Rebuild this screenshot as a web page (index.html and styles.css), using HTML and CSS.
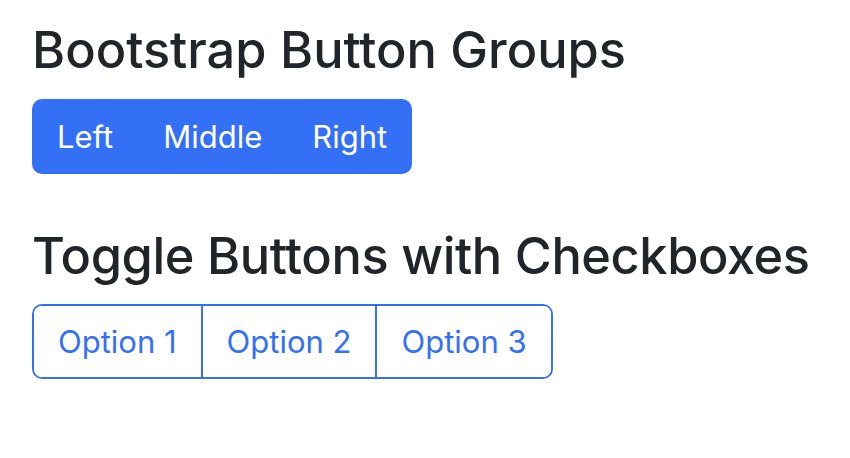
FILE: index.html
```html
<!DOCTYPE html>
<html>
<head>
<meta charset="utf-8">
<link rel="stylesheet" href="styles.css">
</head>
<body>
<div class="container">
  <h2 class="title">Bootstrap Button Groups</h2>
  <div class="btn-group solid">
    <button class="btn btn-primary">Left</button>
    <button class="btn btn-primary">Middle</button>
    <button class="btn btn-primary">Right</button>
  </div>
  <h2 class="title second">Toggle Buttons with Checkboxes</h2>
  <div class="btn-group outline">
    <label class="btn btn-outline">Option 1</label>
    <label class="btn btn-outline">Option 2</label>
    <label class="btn btn-outline">Option 3</label>
  </div>
</div>
</body>
</html>
```
FILE: styles.css
```css
html, body {
  margin: 0;
  padding: 0;
  background: #ffffff;
}
body {
  font-family: Inter, "Noto Sans", sans-serif;
  color: #212529;
}
.container {
  padding: 20px 32px;
  display: flex;
  flex-direction: column;
  align-items: flex-start;
}
.title {
  margin: 0;
  font-size: 50.5px;
  font-weight: 500;
  line-height: 60px;
  white-space: nowrap;
}
.title.second {
  margin-top: 52px;
  letter-spacing: -0.42px;
}
.btn-group {
  display: flex;
  margin-top: 19px;
  border-radius: 10px;
  overflow: hidden;
}
.outline {
  margin-top: 18px;
  border: 2px solid #3370f5;
}
.btn {
  display: block;
  font-family: inherit;
  font-size: 31px;
  line-height: 45px;
  height: 75px;
  box-sizing: border-box;
  padding: 15px 25px;
  border: none;
  margin: 0;
  font-weight: 400;
  white-space: nowrap;
}
.btn-primary {
  background: #3370f5;
  color: #ffffff;
}
.btn-outline {
  color: #3370f5;
  background: #fff;
  height: 71px;
  padding: 13px 24px;
}
.btn-outline + .btn-outline {
  border-left: 2px solid #3370f5;
}
```
